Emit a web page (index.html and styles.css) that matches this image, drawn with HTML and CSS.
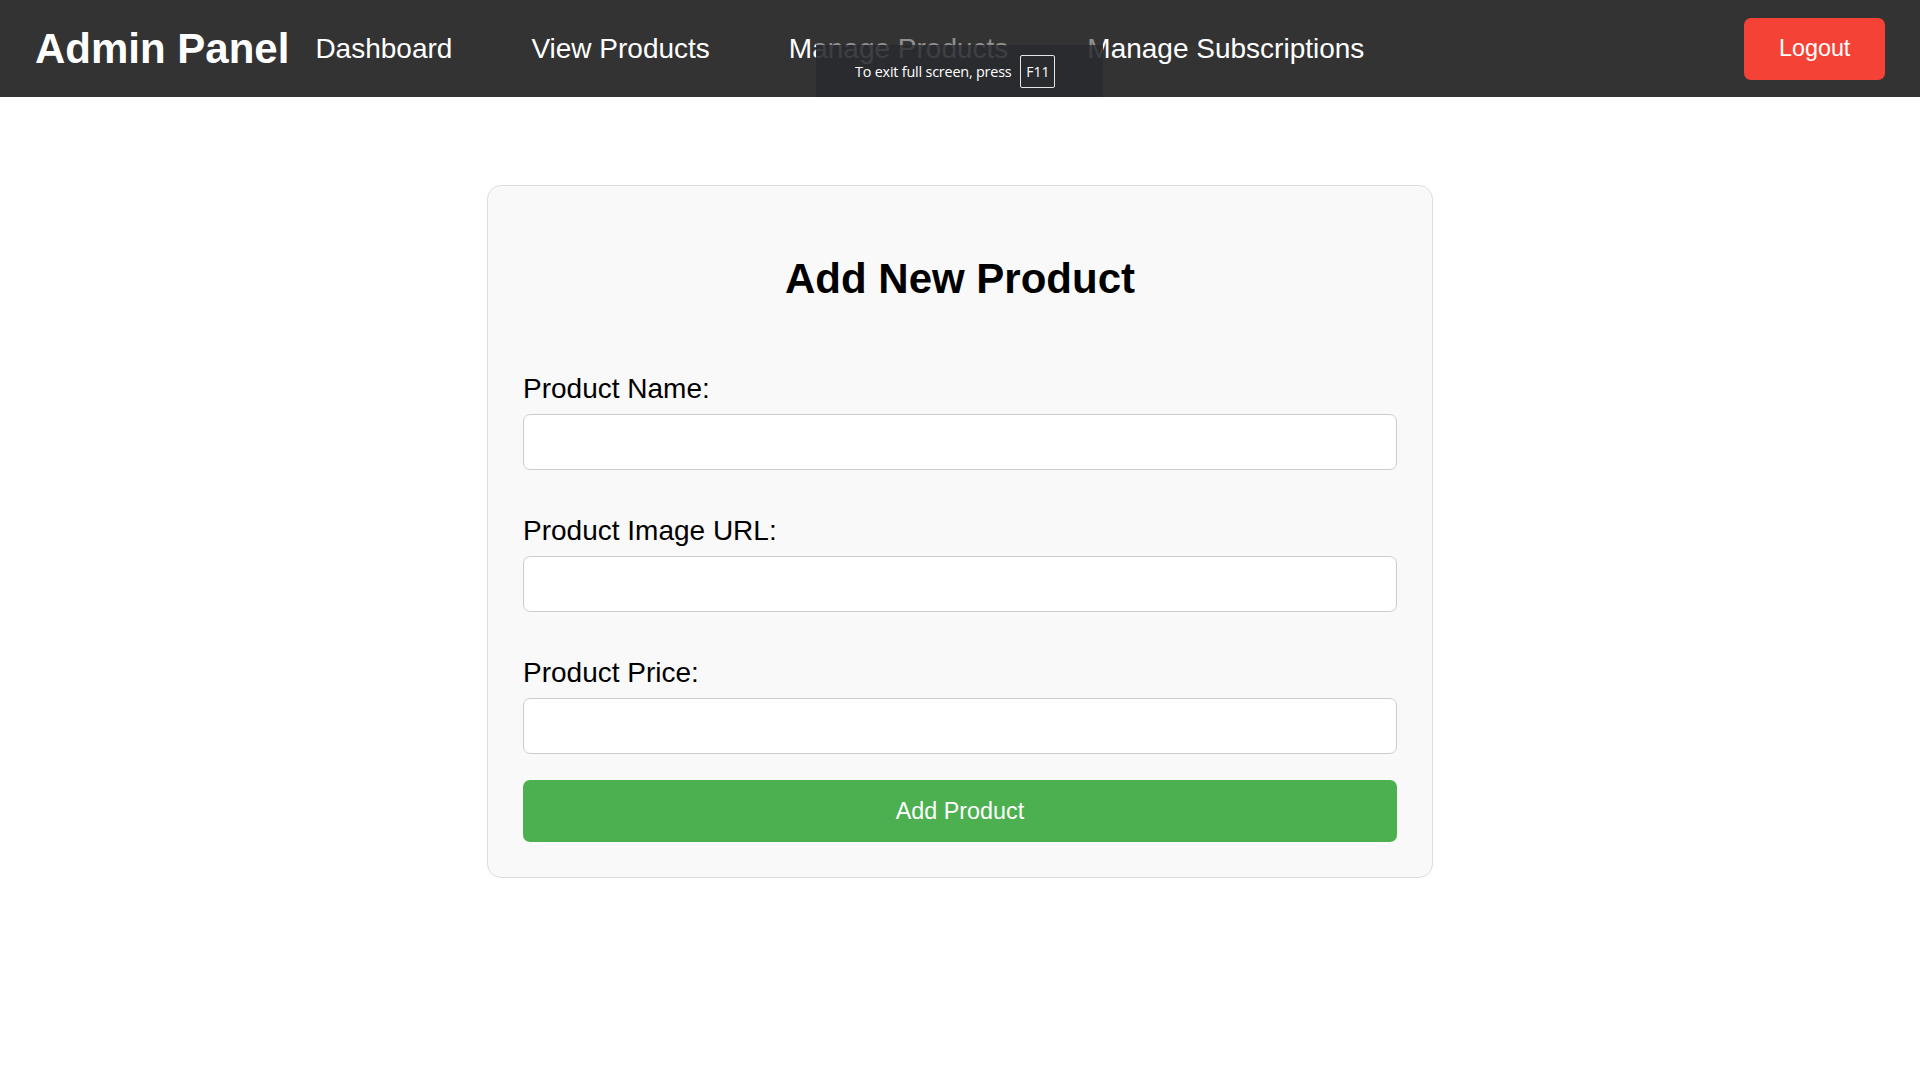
FILE: index.html
```html
<!DOCTYPE html>
<html lang="en">
<head>
<meta charset="utf-8">
<title>Admin Panel - Add Product</title>
<link rel="stylesheet" href="styles.css">
</head>
<body>
<header class="topbar">
  <div class="brand">Admin Panel</div>
  <nav class="nav">
    <a href="#" class="nav-link">Dashboard</a>
    <a href="#" class="nav-link">View Products</a>
    <a href="#" class="nav-link">Manage Products</a>
    <a href="#" class="nav-link">Manage Subscriptions</a>
  </nav>
  <button class="logout" type="button">Logout</button>
  <div class="fs-notice"><span class="fs-text">To exit full screen, press</span><span class="fs-key">F11</span></div>
</header>
<main class="main">
  <section class="card">
    <h2 class="card-title">Add New Product</h2>
    <form class="form">
      <label class="field-label" for="pname">Product Name:</label>
      <input class="field-input" id="pname" type="text">
      <label class="field-label" for="pimg">Product Image URL:</label>
      <input class="field-input" id="pimg" type="text">
      <label class="field-label" for="pprice">Product Price:</label>
      <input class="field-input last" id="pprice" type="text">
      <button class="submit" type="button">Add Product</button>
    </form>
  </section>
</main>
</body>
</html>
```
FILE: styles.css
```css
* { box-sizing: border-box; }
html, body { margin: 0; padding: 0; background: #ffffff; }
body { font-family: "Liberation Sans", Arial, sans-serif; color: #000; }

.topbar {
  position: relative;
  height: 97px;
  background: #333333;
  display: flex;
  align-items: center;
  padding: 0 35px;
}
.brand {
  color: #fff;
  font-weight: bold;
  font-size: 42px;
  line-height: 48px;
  margin-right: 26px;
  white-space: nowrap;
}
.nav { display: flex; align-items: center; gap: 79px; flex: 1; }
.nav-link {
  color: #fff;
  text-decoration: none;
  font-size: 28px;
  line-height: 32px;
  white-space: nowrap;
}
.logout {
  background: #f44336;
  color: #fff;
  border: none;
  border-radius: 7px;
  font-family: "Liberation Sans", Arial, sans-serif;
  font-size: 23.33px;
  line-height: 27px;
  padding: 17.5px 35px;
  height: 62px;
  width: 141px;
}

.fs-notice {
  position: absolute;
  left: 816px;
  top: 45px;
  width: 287px;
  height: 52px;
  background: rgba(40, 42, 46, 0.9);
  display: flex;
  align-items: center;
  justify-content: flex-start;
  gap: 9px;
  padding-left: 39px;
}
.fs-notice::before {
  content: "";
  position: absolute;
  left: 0;
  right: 0;
  top: -45px;
  height: 45px;
  background: rgba(51, 51, 51, 0.55);
}
.fs-text {
  color: #fff;
  font-family: "Open Sans", "Noto Sans", sans-serif;
  font-size: 14.4px;
  letter-spacing: -0.2px;
}
.fs-key {
  color: #fff;
  font-family: "Open Sans", "Noto Sans", sans-serif;
  font-size: 14px;
  border: 1px solid #e6e6e6;
  border-radius: 2px;
  width: 35px;
  height: 33px;
  display: flex;
  align-items: center;
  justify-content: center;
}

.main {
  display: flex;
  justify-content: center;
  padding-top: 88px;
}
.card {
  width: 946px;
  background: #f9f9f9;
  border: 1px solid #dddddd;
  border-radius: 14px;
  padding: 35px;
}
.card-title {
  margin: 34px 0 0;
  text-align: center;
  font-size: 42px;
  line-height: 48px;
  font-weight: bold;
}
.form {
  display: flex;
  flex-direction: column;
  margin-top: 70px;
}
.field-label {
  display: block;
  font-size: 28px;
  line-height: 32px;
  margin-bottom: 9px;
}
.field-input {
  display: block;
  width: 100%;
  height: 56px;
  background: #fff;
  border: 1px solid #cccccc;
  border-radius: 7px;
  margin: 0 0 45px;
  font-size: 23px;
  padding: 0 14px;
}
.field-input.last { margin-bottom: 26px; }
.submit {
  width: 100%;
  height: 62px;
  background: #4caf50;
  color: #fff;
  border: none;
  border-radius: 7px;
  font-family: "Liberation Sans", Arial, sans-serif;
  font-size: 23.33px;
}
```
